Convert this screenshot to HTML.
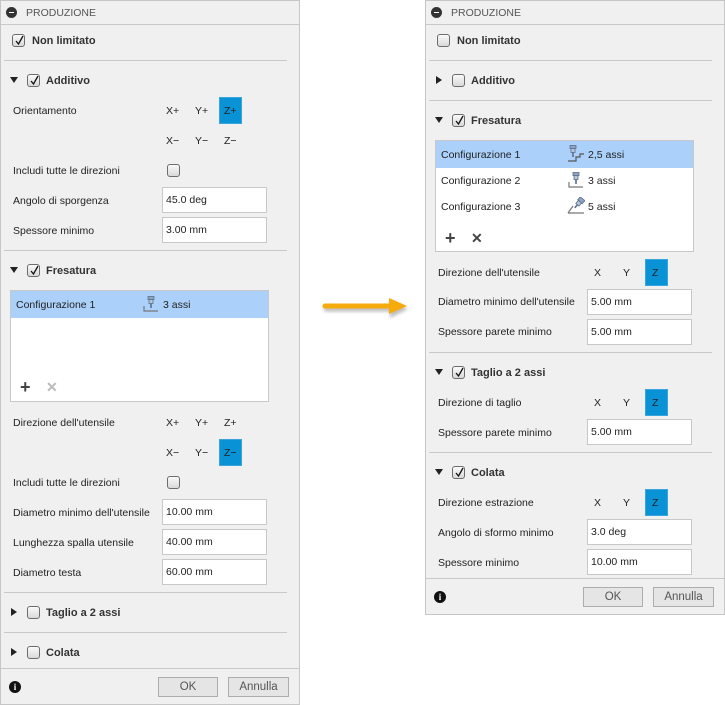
<!DOCTYPE html>
<html><head><meta charset="utf-8">
<style>
*{box-sizing:border-box;margin:0;padding:0}
body{width:725px;height:705px;background:#fff;position:relative;overflow:hidden;font-family:"Liberation Sans",sans-serif;font-size:10.5px;color:#222}
.p{position:absolute;top:0;background:#f0f0f0;border:1px solid #c6c6c6}
.p>*{position:absolute}
.t{line-height:14px;white-space:nowrap}
.h{font-weight:bold;font-size:11px;line-height:14px;color:#333}
.hd{color:#555;font-size:10.5px;line-height:14px}
.sep{left:3px;width:283px;height:1px;background:#c8c8c8}
.full{left:0;width:100%;height:1px;background:#c8c8c8}
.cb{width:13px;height:13px;border:1px solid #6c6c6c;border-radius:3px;background:linear-gradient(#fafafa,#d8d8d8)}
.cb svg{position:absolute;left:1px;top:0}
.tri{width:0;height:0}
.dn{border-left:4px solid transparent;border-right:4px solid transparent;border-top:6px solid #222}
.rt{border-top:4px solid transparent;border-bottom:4px solid transparent;border-left:6px solid #222}
.inp{width:105px;height:26px;background:#fff;border:1px solid #c8c8c8;padding:5px 0 0 3px;line-height:14px}
.bl{width:23px;height:27px;background:#0993d6;border:1px solid #3aa5dc}
.ax{line-height:14px}
.list{background:#fff;border:1px solid #c8c8c8}
.sel{background:#abd1fb}
.btn{height:20px;border:1px solid #adadad;background:#e5e5e5;text-align:center;line-height:18px;font-size:11.5px;color:#555}
.info{width:12px;height:12px;border-radius:50%;background:#111;color:#fff;font-weight:bold;font-size:9px;line-height:12px;text-align:center;font-family:"Liberation Serif",serif}
.minus{width:11px;height:11px;border-radius:50%;background:#333}
.minus:after{content:"";position:absolute;left:3px;top:5px;width:5px;height:1px;background:#fff}
</style></head><body>

<!-- LEFT PANEL -->
<div class="p" style="left:0;width:300px;height:705px">
 <div class="minus" style="left:5px;top:6px"></div>
 <div class="hd" style="left:25px;top:5px">PRODUZIONE</div>
 <div class="full" style="top:23px"></div>
 <div class="cb" style="left:11px;top:33px"><svg width="11" height="11" viewBox="0 0 11 11"><path d="M2 6 L4.5 9 L9 1" fill="none" stroke="#111" stroke-width="1.3"/></svg></div>
 <div class="h" style="left:31px;top:33px">Non limitato</div>
 <div class="sep" style="top:59px"></div>
 <div class="tri dn" style="left:9px;top:76px"></div>
 <div class="cb" style="left:26px;top:73px"><svg width="11" height="11" viewBox="0 0 11 11"><path d="M2 6 L4.5 9 L9 1" fill="none" stroke="#111" stroke-width="1.3"/></svg></div>
 <div class="h" style="left:45px;top:73px">Additivo</div>
 <div class="t" style="left:12px;top:103px">Orientamento</div>
 <div class="ax" style="left:165px;top:103px">X+</div>
 <div class="ax" style="left:194px;top:103px">Y+</div>
 <div class="bl" style="left:218px;top:96px"></div>
 <div class="ax" style="left:223px;top:103px">Z+</div>
 <div class="ax" style="left:165px;top:133px">X−</div>
 <div class="ax" style="left:194px;top:133px">Y−</div>
 <div class="ax" style="left:223px;top:133px">Z−</div>
 <div class="t" style="left:12px;top:163px">Includi tutte le direzioni</div>
 <div class="cb" style="left:166px;top:163px"></div>
 <div class="t" style="left:12px;top:193px">Angolo di sporgenza</div>
 <div class="inp" style="left:161px;top:186px">45.0 deg</div>
 <div class="t" style="left:12px;top:223px">Spessore minimo</div>
 <div class="inp" style="left:161px;top:216px">3.00 mm</div>
 <div class="sep" style="top:249px"></div>
 <div class="tri dn" style="left:9px;top:266px"></div>
 <div class="cb" style="left:26px;top:263px"><svg width="11" height="11" viewBox="0 0 11 11"><path d="M2 6 L4.5 9 L9 1" fill="none" stroke="#111" stroke-width="1.3"/></svg></div>
 <div class="h" style="left:45px;top:263px">Fresatura</div>
 <div class="list" style="left:9px;top:289px;width:259px;height:112px">
  <div class="sel" style="position:absolute;left:0;top:0;width:257px;height:27px"></div>
  <div class="t" style="position:absolute;left:5px;top:7px">Configurazione 1</div>
  <svg style="position:absolute;left:132px;top:5px" width="16" height="17" viewBox="0 0 16 17"><rect x="5" y="0.5" width="6" height="3" fill="#8aa4c4" stroke="#5c6f88" stroke-width="0.8"/><rect x="6" y="3.5" width="4" height="4" fill="#b7c6d8" stroke="#5c6f88" stroke-width="0.8"/><path d="M8 7.5 V12" stroke="#5c6f88" stroke-width="1.6"/><path d="M1 10 V15 H15" fill="none" stroke="#777" stroke-width="1.2"/></svg>
  <div class="t" style="position:absolute;left:152px;top:7px">3 assi</div>
  <div style="position:absolute;left:9px;top:89px;font-size:18px;font-weight:bold;line-height:14px;color:#444">+</div>
  <div style="position:absolute;left:35px;top:89px;font-size:14px;font-weight:bold;line-height:14px;color:#bbb">✕</div>
 </div>
 <div class="t" style="left:12px;top:415px">Direzione dell'utensile</div>
 <div class="ax" style="left:165px;top:415px">X+</div>
 <div class="ax" style="left:194px;top:415px">Y+</div>
 <div class="ax" style="left:223px;top:415px">Z+</div>
 <div class="ax" style="left:165px;top:445px">X−</div>
 <div class="ax" style="left:194px;top:445px">Y−</div>
 <div class="bl" style="left:218px;top:438px"></div>
 <div class="ax" style="left:223px;top:445px">Z−</div>
 <div class="t" style="left:12px;top:475px">Includi tutte le direzioni</div>
 <div class="cb" style="left:166px;top:475px"></div>
 <div class="t" style="left:12px;top:505px">Diametro minimo dell'utensile</div>
 <div class="inp" style="left:161px;top:498px">10.00 mm</div>
 <div class="t" style="left:12px;top:535px">Lunghezza spalla utensile</div>
 <div class="inp" style="left:161px;top:528px">40.00 mm</div>
 <div class="t" style="left:12px;top:565px">Diametro testa</div>
 <div class="inp" style="left:161px;top:558px">60.00 mm</div>
 <div class="sep" style="top:591px"></div>
 <div class="tri rt" style="left:10px;top:607px"></div>
 <div class="cb" style="left:26px;top:605px"></div>
 <div class="h" style="left:45px;top:605px">Taglio a 2 assi</div>
 <div class="sep" style="top:631px"></div>
 <div class="tri rt" style="left:10px;top:647px"></div>
 <div class="cb" style="left:26px;top:645px"></div>
 <div class="h" style="left:45px;top:645px">Colata</div>
 <div class="full" style="top:667px"></div>
 <div class="info" style="left:8px;top:680px">i</div>
 <div class="btn" style="left:157px;top:676px;width:60px">OK</div>
 <div class="btn" style="left:227px;top:676px;width:61px">Annulla</div>
</div>

<!-- ARROW -->
<svg style="position:absolute;left:318px;top:292px" width="96" height="32" viewBox="0 0 96 32">
 <defs><filter id="s" x="-20%" y="-50%" width="140%" height="200%"><feGaussianBlur stdDeviation="1.5"/></filter></defs>
 <g transform="translate(1,3)" opacity="0.35" filter="url(#s)"><path d="M7 14 H72" stroke="#444" stroke-width="5" stroke-linecap="round"/><path d="M71 5 L89 14 L71 23 Z" fill="#444"/></g>
 <path d="M7 14 H72" stroke="#f6ab0c" stroke-width="5" stroke-linecap="round"/>
 <path d="M71 6 L89 14 L71 22 Z" fill="#f6ab0c"/>
</svg>

<!-- RIGHT PANEL -->
<div class="p" style="left:425px;width:300px;height:615px">
 <div class="minus" style="left:5px;top:6px"></div>
 <div class="hd" style="left:25px;top:5px">PRODUZIONE</div>
 <div class="full" style="top:23px"></div>
 <div class="cb" style="left:11px;top:33px"></div>
 <div class="h" style="left:31px;top:33px">Non limitato</div>
 <div class="sep" style="top:59px"></div>
 <div class="tri rt" style="left:10px;top:75px"></div>
 <div class="cb" style="left:26px;top:73px"></div>
 <div class="h" style="left:45px;top:73px">Additivo</div>
 <div class="sep" style="top:99px"></div>
 <div class="tri dn" style="left:9px;top:116px"></div>
 <div class="cb" style="left:26px;top:113px"><svg width="11" height="11" viewBox="0 0 11 11"><path d="M2 6 L4.5 9 L9 1" fill="none" stroke="#111" stroke-width="1.3"/></svg></div>
 <div class="h" style="left:45px;top:113px">Fresatura</div>
 <div class="list" style="left:9px;top:139px;width:259px;height:112px">
  <div class="sel" style="position:absolute;left:0;top:0;width:257px;height:27px"></div>
  <div class="t" style="position:absolute;left:5px;top:7px">Configurazione 1</div>
  <svg style="position:absolute;left:131px;top:4px" width="18" height="18" viewBox="0 0 18 18"><rect x="3" y="0.5" width="6" height="3" fill="#8aa4c4" stroke="#5c6f88" stroke-width="0.8"/><rect x="4" y="3.5" width="4" height="4" fill="#b7c6d8" stroke="#5c6f88" stroke-width="0.8"/><path d="M6 7.5 V12" stroke="#5c6f88" stroke-width="1.6"/><path d="M1 16 H9 V12 H13 V9 H17" fill="none" stroke="#555" stroke-width="1.2"/></svg>
  <div class="t" style="position:absolute;left:152px;top:7px">2,5 assi</div>
  <div class="t" style="position:absolute;left:5px;top:33px">Configurazione 2</div>
  <svg style="position:absolute;left:132px;top:31px" width="16" height="17" viewBox="0 0 16 17"><rect x="5" y="0.5" width="6" height="3" fill="#8aa4c4" stroke="#5c6f88" stroke-width="0.8"/><rect x="6" y="3.5" width="4" height="4" fill="#b7c6d8" stroke="#5c6f88" stroke-width="0.8"/><path d="M8 7.5 V12" stroke="#5c6f88" stroke-width="1.6"/><path d="M1 10 V15 H15" fill="none" stroke="#777" stroke-width="1.2"/></svg>
  <div class="t" style="position:absolute;left:152px;top:33px">3 assi</div>
  <div class="t" style="position:absolute;left:5px;top:59px">Configurazione 3</div>
  <svg style="position:absolute;left:131px;top:56px" width="18" height="18" viewBox="0 0 18 18"><g transform="rotate(40 11 7)"><rect x="8" y="0" width="6" height="4" fill="#8aa4c4" stroke="#5c6f88" stroke-width="0.8"/><rect x="9" y="4" width="4" height="4" fill="#b7c6d8" stroke="#5c6f88" stroke-width="0.8"/><path d="M11 8 V12" stroke="#5c6f88" stroke-width="1.6"/></g><path d="M1 16 H17 M1 16 L6 9" fill="none" stroke="#777" stroke-width="1.2"/></svg>
  <div class="t" style="position:absolute;left:152px;top:59px">5 assi</div>
  <div style="position:absolute;left:9px;top:90px;font-size:18px;font-weight:bold;line-height:14px;color:#444">+</div>
  <div style="position:absolute;left:35px;top:90px;font-size:14px;font-weight:bold;line-height:14px;color:#444">✕</div>
 </div>
 <div class="t" style="left:12px;top:265px">Direzione dell'utensile</div>
 <div class="ax" style="left:168px;top:265px">X</div>
 <div class="ax" style="left:197px;top:265px">Y</div>
 <div class="bl" style="left:219px;top:258px"></div>
 <div class="ax" style="left:226px;top:265px">Z</div>
 <div class="t" style="left:12px;top:294px">Diametro minimo dell'utensile</div>
 <div class="inp" style="left:161px;top:288px">5.00 mm</div>
 <div class="t" style="left:12px;top:324px">Spessore parete minimo</div>
 <div class="inp" style="left:161px;top:318px">5.00 mm</div>
 <div class="sep" style="top:351px"></div>
 <div class="tri dn" style="left:9px;top:368px"></div>
 <div class="cb" style="left:26px;top:365px"><svg width="11" height="11" viewBox="0 0 11 11"><path d="M2 6 L4.5 9 L9 1" fill="none" stroke="#111" stroke-width="1.3"/></svg></div>
 <div class="h" style="left:45px;top:365px">Taglio a 2 assi</div>
 <div class="t" style="left:12px;top:395px">Direzione di taglio</div>
 <div class="ax" style="left:168px;top:395px">X</div>
 <div class="ax" style="left:197px;top:395px">Y</div>
 <div class="bl" style="left:219px;top:388px"></div>
 <div class="ax" style="left:226px;top:395px">Z</div>
 <div class="t" style="left:12px;top:425px">Spessore parete minimo</div>
 <div class="inp" style="left:161px;top:418px">5.00 mm</div>
 <div class="sep" style="top:451px"></div>
 <div class="tri dn" style="left:9px;top:468px"></div>
 <div class="cb" style="left:26px;top:465px"><svg width="11" height="11" viewBox="0 0 11 11"><path d="M2 6 L4.5 9 L9 1" fill="none" stroke="#111" stroke-width="1.3"/></svg></div>
 <div class="h" style="left:45px;top:465px">Colata</div>
 <div class="t" style="left:12px;top:495px">Direzione estrazione</div>
 <div class="ax" style="left:168px;top:495px">X</div>
 <div class="ax" style="left:197px;top:495px">Y</div>
 <div class="bl" style="left:219px;top:488px"></div>
 <div class="ax" style="left:226px;top:495px">Z</div>
 <div class="t" style="left:12px;top:525px">Angolo di sformo minimo</div>
 <div class="inp" style="left:161px;top:518px">3.0 deg</div>
 <div class="t" style="left:12px;top:555px">Spessore minimo</div>
 <div class="inp" style="left:161px;top:548px">10.00 mm</div>
 <div class="full" style="top:577px"></div>
 <div class="info" style="left:8px;top:590px">i</div>
 <div class="btn" style="left:157px;top:586px;width:60px">OK</div>
 <div class="btn" style="left:227px;top:586px;width:61px">Annulla</div>
</div>
</body></html>
